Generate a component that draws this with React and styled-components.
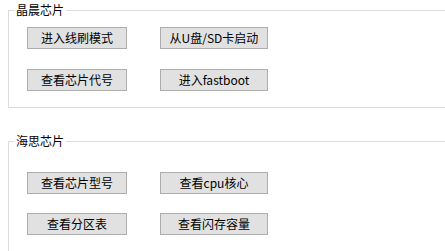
import React from "react";
import styled, { createGlobalStyle } from "styled-components";

const Global = createGlobalStyle`
  html, body { margin: 0; padding: 0; background: #ffffff; overflow: hidden; }
  body { font-family: "Noto Sans CJK SC", "Microsoft YaHei", sans-serif; font-size: 12px; color: #000; }
`;

const Page = styled.div`
  width: 445px;
  height: 251px;
  overflow: hidden;
  padding: 3px 0 0 8px;
  box-sizing: border-box;
`;

const Group = styled.fieldset`
  margin: ${(p) => p.$top}px 0 0 0;
  width: 520px;
  box-sizing: border-box;
  border: 1px solid #dcdcdc;
  padding: ${(p) => p.$padTop}px 0 ${(p) => p.$padBottom}px 0;
  min-inline-size: 0;
`;

const Legend = styled.legend`
  font-size: 12px;
  line-height: 14px;
  height: 14px;
  padding: 0 2px;
  margin-left: 5px;
  color: #000;
`;

const Grid = styled.div`
  display: grid;
  grid-template-columns: 100px 108px;
  column-gap: 33px;
  row-gap: ${(p) => p.$gap}px;
  padding-left: 18px;
`;

const Button = styled.button`
  height: 22px;
  box-sizing: border-box;
  margin: 0;
  padding: 0;
  background: #e1e1e1;
  border: 1px solid #adadad;
  border-radius: 0;
  font-family: "Noto Sans CJK SC", "Microsoft YaHei", sans-serif;
  font-size: 12px;
  line-height: 20px;
  color: #000;
  text-align: center;
  white-space: nowrap;
`;

const groups = [
  {
    title: "晶晨芯片",
    top: 0,
    padTop: 10,
    padBottom: 16,
    gap: 20,
    buttons: ["进入线刷模式", "从U盘/SD卡启动", "查看芯片代号", "进入fastboot"],
  },
  {
    title: "海思芯片",
    top: 26,
    padTop: 24,
    padBottom: 40,
    gap: 19,
    buttons: ["查看芯片型号", "查看cpu核心", "查看分区表", "查看闪存容量"],
  },
];

export default function App() {
  return (
    <Page>
      <Global />
      {groups.map((g) => (
        <Group key={g.title} $top={g.top} $padTop={g.padTop} $padBottom={g.padBottom}>
          <Legend>{g.title}</Legend>
          <Grid $gap={g.gap}>
            {g.buttons.map((b) => (
              <Button key={b}>{b}</Button>
            ))}
          </Grid>
        </Group>
      ))}
    </Page>
  );
}
